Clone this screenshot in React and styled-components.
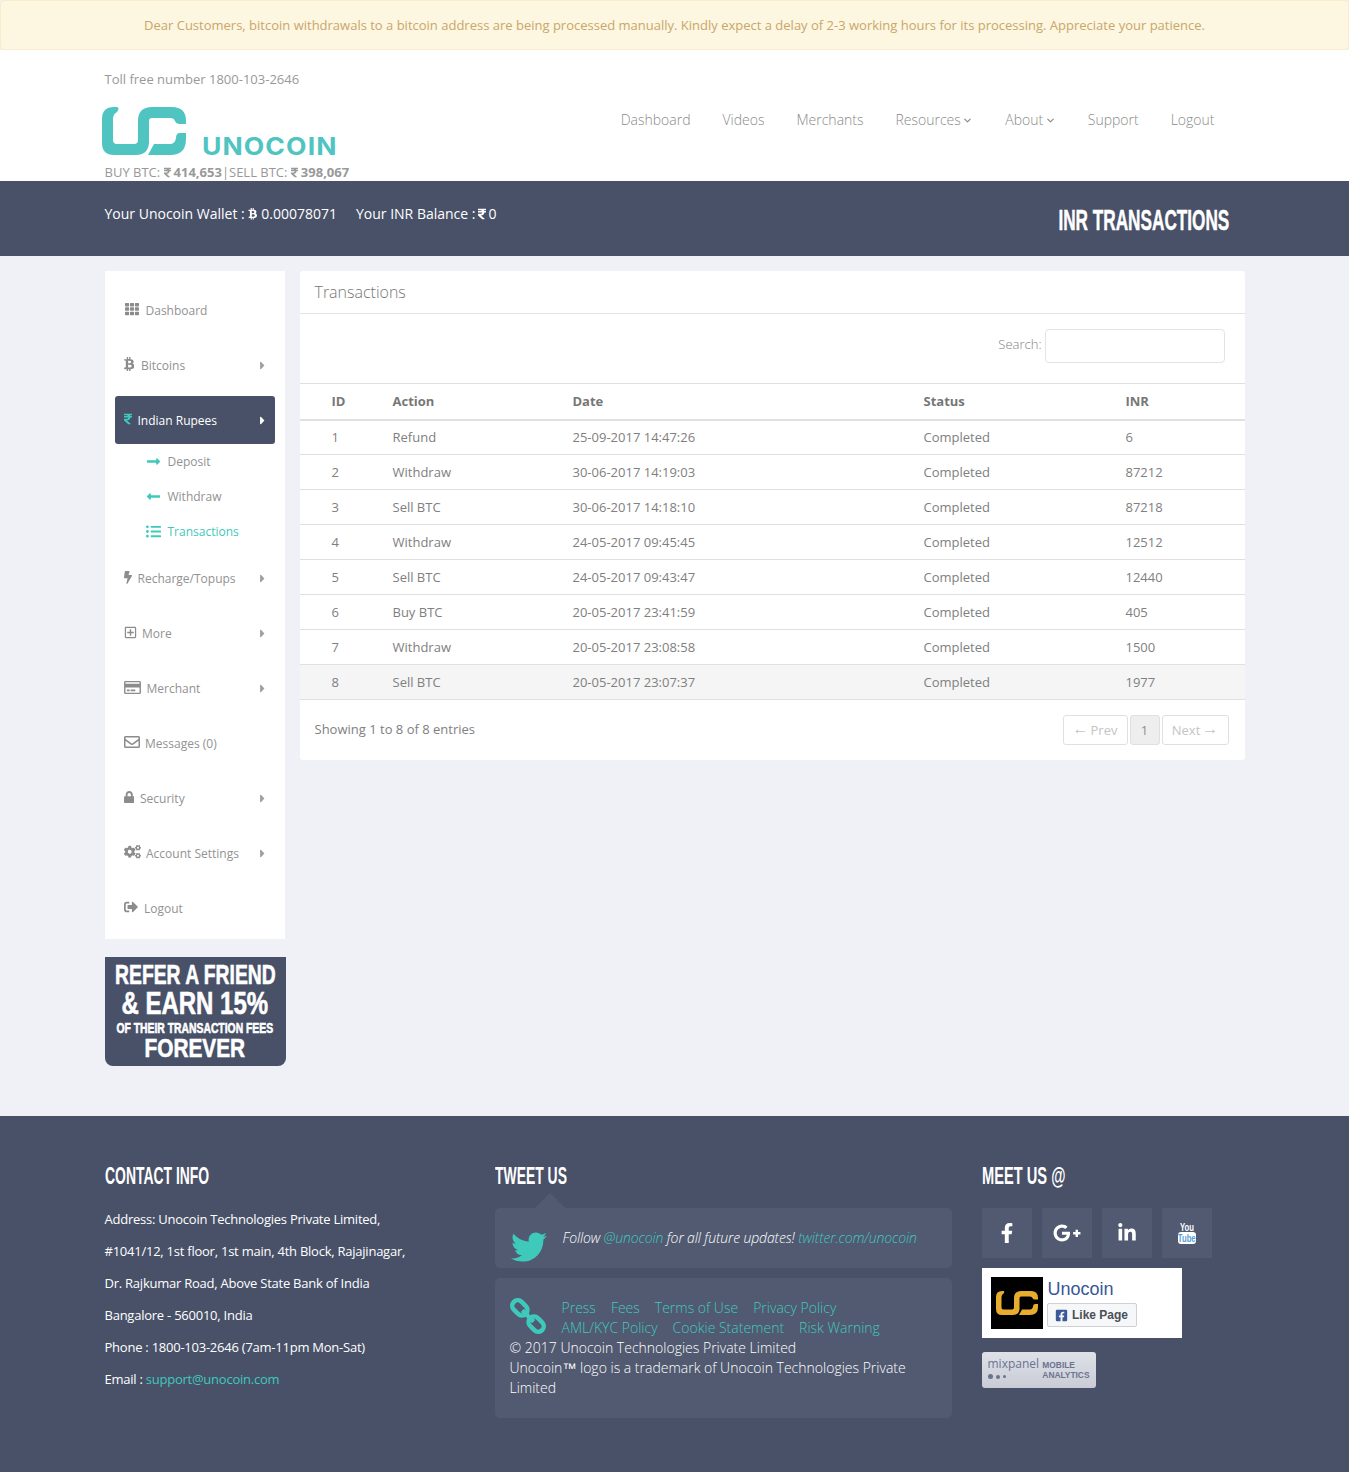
import React from 'react';
import styled, { createGlobalStyle } from 'styled-components';
import {
  FaTh, FaBtc, FaRupeeSign, FaLongArrowAltRight, FaLongArrowAltLeft, FaListUl, FaBolt,
  FaRegPlusSquare, FaRegCreditCard, FaRegEnvelope, FaLock, FaCogs, FaSignOutAlt, FaCaretRight,
  FaTwitter, FaFacebookF, FaGooglePlusG, FaLinkedinIn, FaFacebookSquare,
} from 'react-icons/fa';
import { LuChevronDown } from 'react-icons/lu';

const navy = '#485168';
const card = '#515a71';
const teal = '#3fc9bb';

const GlobalStyle = createGlobalStyle`
  html, body { margin: 0; padding: 0; }
  body {
    background: #eff1f6;
    font-family: "Open Sans", "Liberation Sans", sans-serif;
    font-size: 13px;
    color: #808080;
  }
  a { color: inherit; text-decoration: none; }
  * { box-sizing: border-box; }
`;

const Alert = styled.div`
  height: 50px;
  line-height: 48px;
  text-align: center;
  background: #fdf6e1;
  border: 1px solid #faebcc;
  border-radius: 4px;
  color: #c9a66b;
  font-size: 13px;
`;

const Container = styled.div`
  width: 1140px;
  margin: 0 auto;
`;

const HeaderBar = styled.header`
  background: #fff;
  height: 131px;
`;

const HeaderInner = styled(Container)`
  display: flex;
  height: 100%;
`;

const Brand = styled.div`
  padding-top: 20px;
  line-height: 18px;
  color: #999;
  white-space: nowrap;
`;

const LogoRow = styled.div`
  display: flex;
  align-items: flex-end;
  gap: 16px;
  margin: 19px 0 8px -3px;
  height: 48px;
`;

const LogoWord = styled.span`
  font-family: Inter, "Open Sans", sans-serif;
  font-weight: 700;
  font-size: 24px;
  line-height: 16px;
  letter-spacing: 1px;
  color: #4fc4c1;
`;

// the glyph is narrower in the old icon font, so it is squeezed to the size asked for
const Rupee = styled(FaRupeeSign).attrs({ preserveAspectRatio: 'none' })`
  &&& {
    width: ${(p) => p.$w}px;
    height: ${(p) => p.$h}px;
    vertical-align: -1px;
  }
`;

const PriceRupee = styled(Rupee)`
  margin-right: 3px;
`;

const Nav = styled.nav`
  margin-left: auto;
  padding: 60px 30px 0 0;
  display: flex;
  align-items: flex-start;
  gap: 32px;
  font-size: 14px;
  font-weight: 300;
  line-height: 20px;
  color: #8a8a8a;
`;

const NavLink = styled.a`
  display: flex;
  align-items: center;
  gap: 1.5px;
`;

const WalletBar = styled.div`
  background: ${navy};
  height: 75px;
  color: #fff;
`;

const WalletInner = styled(Container)`
  display: flex;
  justify-content: space-between;
  align-items: flex-start;
`;

const WalletText = styled.div`
  display: flex;
  align-items: flex-start;
  gap: 19px;
  padding-top: 24px;
  font-size: 14px;
  line-height: 18px;
`;

const Money = styled.span`
  display: inline-flex;
  align-items: center;
  gap: 2.5px;
`;

const PageTitle = styled.h1`
  margin: 0;
  padding: 22px 15px 0 0;
  font-size: 30px;
  line-height: 34px;
  font-weight: 700;
  font-family: "Liberation Sans Narrow", "Liberation Sans", sans-serif;
  white-space: nowrap;
  -webkit-text-stroke: 0.5px #fff;
`;

const Condensed = styled.span`
  display: inline-block;
  white-space: nowrap;
  transform: scaleX(${(p) => p.$sx});
  transform-origin: ${(p) => p.$origin || 'left'} center;
`;

const Content = styled(Container)`
  display: flex;
  gap: 15px;
  padding: 15px 0 50px;
  align-items: flex-start;
`;

const SideColumn = styled.div`
  width: 180px;
  flex: none;
`;

const SideMenu = styled.ul`
  display: flow-root;
  list-style: none;
  margin: 0;
  padding: 15px 10px 0;
  background: #fff;
`;

const SideItem = styled.li`
  display: flex;
  align-items: center;
  gap: 5px;
  height: 48px;
  margin-bottom: ${(p) => (p.$tight ? '0' : '7px')};
  padding: 0 10px 0 9px;
  border-radius: 3px;
  font-size: 12px;
  background: ${(p) => (p.$active ? navy : 'transparent')};
  color: ${(p) => (p.$active ? '#fff' : '#929292')};
`;

const SideIcon = styled.span`
  flex: none;
  display: flex;
  width: ${(p) => p.$box}px;
  margin-top: -2px;
  color: ${(p) => (p.$active ? teal : '#8c8c8c')};
  svg {
    width: ${(p) => p.$w}px;
    height: ${(p) => p.$h}px;
  }
`;

const Caret = styled(FaCaretRight)`
  margin-left: auto;
  margin-right: -4.5px;
  color: ${(p) => (p.$active ? '#fff' : '#a0a0a0')};
`;

const SubMenu = styled.ul`
  list-style: none;
  margin: 0 0 5px;
  padding: 0;
`;

const SubItem = styled.li`
  display: flex;
  align-items: center;
  gap: 7px;
  height: 35px;
  padding-left: 31px;
  font-size: 12px;
  color: ${(p) => (p.$current ? teal : '#929292')};
  svg { color: ${teal}; margin-top: -1px; }
`;

const ReferBanner = styled.div`
  margin-top: 18px;
  width: 181px;
  height: 109px;
  padding-top: 4px;
  background: ${navy};
  border-radius: 0 0 8px 8px;
  color: #fff;
  font-family: "Liberation Sans", sans-serif;
  font-weight: 700;
  overflow: hidden;
  -webkit-text-stroke: 0.6px #fff;
`;

const ReferLine = styled.div`
  display: flex;
  justify-content: center;
  font-size: ${(p) => p.$size}px;
  line-height: ${(p) => p.$lh}px;
`;

const Panel = styled.section`
  flex: 1;
  height: 489px;
  background: #fff;
  border-radius: 3px;
`;

const PanelHead = styled.div`
  height: 43px;
  padding: 0 15px;
  line-height: 42px;
  font-size: 16px;
  font-weight: 300;
  color: #777;
  border-bottom: 1px solid #e3e3e3;
`;

const SearchRow = styled.div`
  height: 69px;
  padding: 15px 20px 0 0;
  display: flex;
  justify-content: flex-end;
  align-items: flex-start;
  gap: 3px;
  font-size: 13px;
  font-weight: 300;
  line-height: 30px;
`;

const SearchInput = styled.input`
  width: 180px;
  height: 34px;
  border: 1px solid #e3e3e3;
  border-radius: 4px;
  background: #fff;
  outline: none;
`;

const Table = styled.table`
  width: 945px;
  table-layout: fixed;
  border-collapse: collapse;
  border-top: 1px solid #e0e0e0;
`;

const Th = styled.th`
  height: 36px;
  padding: 0 0 0 15px;
  text-align: left;
  font-size: 13px;
  font-weight: 700;
  color: #777;
  border-bottom: 2px solid #e0e0e0;
  &:first-child { padding-left: 32px; }
`;

const Tr = styled.tr`
  background: ${(p) => (p.$hover ? '#f5f5f5' : 'transparent')};
`;

const Td = styled.td`
  height: 35px;
  padding: 0 0 0 15px;
  border-bottom: 1px solid #e0e0e0;
  &:first-child { padding-left: 32px; }
`;

const TableFoot = styled.div`
  display: flex;
  justify-content: space-between;
  align-items: flex-start;
  padding: 15px 16px 0 15px;
  line-height: 28px;
`;

const Pager = styled.div`
  display: flex;
  gap: 2px;
`;

const PageButton = styled.span`
  display: flex;
  align-items: center;
  justify-content: center;
  gap: 2px;
  width: ${(p) => p.$w}px;
  height: 30px;
  border: 1px solid #e0e0e0;
  border-radius: 3px;
  font-size: 13px;
  color: ${(p) => (p.$on ? '#8f8f8f' : '#c4c4c4')};
  background: ${(p) => (p.$on ? '#eee' : '#fff')};
`;

const Arrow = styled.span`
  margin-top: -3px;
  font-family: "Liberation Sans", sans-serif;
  font-size: 16px;
  line-height: 1;
`;

const Footer = styled.footer`
  background: ${navy};
  height: 356px;
  padding-top: 50px;
  color: #fff;
`;

const FooterGrid = styled(Container)`
  display: grid;
  grid-template-columns: 390px 487px 263px;
`;

const FootHeading = styled.h3`
  margin: 0 0 17px;
  font-family: "Liberation Sans Narrow", "Liberation Sans", sans-serif;
  font-size: 24px;
  font-weight: 700;
  line-height: 20px;
  white-space: nowrap;
`;

const ContactLine = styled.div`
  font-size: 13px;
  line-height: 32px;
  letter-spacing: -0.24px;
  white-space: nowrap;
`;

const TealLink = styled.a`
  color: ${teal};
`;

const FootBoxes = styled.div`
  padding-top: 5px;
  width: 457px;
`;

const TweetBox = styled.div`
  position: relative;
  display: flex;
  align-items: center;
  gap: 16px;
  height: 60px;
  padding: 8px 16px 0;
  background: ${card};
  border-radius: 5px;
  font-size: 14px;
  font-weight: 300;
  font-style: italic;
  letter-spacing: -0.13px;
  white-space: nowrap;
  svg { margin-top: 10px; flex: none; }
  &::before {
    content: '';
    position: absolute;
    left: 40px;
    top: -15px;
    border: 15px solid transparent;
    border-top: 0;
    border-bottom-color: ${card};
  }
`;

const TweetText = styled.div`
  margin-top: -10px;
`;

const LinksBox = styled.div`
  margin-top: 10px;
  height: 140px;
  padding: 20px 15px;
  background: ${card};
  border-radius: 5px;
  font-size: 14px;
  font-weight: 300;
  line-height: 20px;
`;

const LinkIcon = styled.div`
  float: left;
  width: 52px;
  height: 40px;
  color: ${teal};
`;

const LinkRow = styled.div`
  display: flex;
  gap: 15px;
  color: ${teal};
`;

const TradeMark = styled.span`
  font-family: "Liberation Sans", sans-serif;
  font-weight: 400;
`;

const Socials = styled.div`
  padding-top: 5px;
  display: flex;
  gap: 10px;
`;

const SocialTile = styled.a`
  width: 50px;
  height: 50px;
  display: flex;
  align-items: center;
  justify-content: center;
  background: ${card};
  color: #fff;
`;

const YouTube = styled.span`
  width: 18px;
  display: flex;
  flex-direction: column;
  align-items: center;
  font-family: "Liberation Sans", sans-serif;
  font-size: 11px;
  font-weight: 700;
  line-height: 9px;
`;

const Tube = styled.span`
  width: 18px;
  height: 12px;
  display: flex;
  justify-content: center;
  background: #fff;
  color: #5a9fd8;
  border-radius: 3px;
  line-height: 12px;
`;

const FbBox = styled.div`
  margin-top: 10px;
  width: 200px;
  height: 70px;
  padding: 9px;
  display: flex;
  gap: 4px;
  background: #fff;
  font-family: "Liberation Sans", sans-serif;
`;

const FbAvatar = styled.div`
  width: 52px;
  height: 52px;
  background: #000;
  display: flex;
  align-items: center;
  justify-content: center;
`;

const FbName = styled.div`
  padding-left: 1px;
  font-size: 18px;
  line-height: 24px;
  color: #365899;
`;

const FbLike = styled.div`
  margin-top: 2px;
  width: 90px;
  height: 24px;
  display: flex;
  align-items: center;
  justify-content: center;
  gap: 4px;
  font-size: 12px;
  font-weight: 700;
  color: #4b4f56;
  background: #f6f7f9;
  border: 1px solid #ced0d4;
  border-radius: 2px;
  svg { color: #3b5998; }
`;

const Mixpanel = styled.div`
  margin-top: 14px;
  width: 114px;
  height: 36px;
  padding: 6px;
  display: flex;
  justify-content: space-between;
  background: linear-gradient(#dfe1e8, #c9ccd6);
  border-radius: 3px;
  color: #6a7390;
`;

const MixName = styled.div`
  font-size: 12px;
  line-height: 12px;
`;

const MixDots = styled.div`
  display: flex;
  align-items: center;
  gap: 3px;
  margin-top: 4px;
`;

const MixDot = styled.i`
  width: ${(p) => p.$d}px;
  height: ${(p) => p.$d}px;
  border-radius: 50%;
  background: currentColor;
`;

const MixTag = styled.div`
  font-family: "Liberation Sans", sans-serif;
  font-size: 8.4px;
  font-weight: 700;
  line-height: 10px;
  margin-top: 2px;
`;

// the two part UC mark, also used in gold in the facebook box
const LogoMark = ({ width, height, color }) => (
  <svg width={width} height={height} viewBox="0 0 84 48" fill={color}>
    <path d="M0 12Q0 0 12 0L15 0Q18 1 15 5Q11 7 11 12L11 33Q11 37 15 37L32 37Q36 37 36 33L36 14Q36 0 50 0L70 0Q84 0 84 14L84 17L78 17Q74 17 73 14Q72 11 68 11L50 11Q47 11 47 14L47 36Q46 48 34 48L12 48Q0 48 0 36Z" />
    <path d="M46 48L52 37L68 37Q73 37 74 31Q74 26 78 26L84 26L84 32Q84 48 68 48Z" />
  </svg>
);

const ChainIcon = () => (
  <svg width="36" height="36" viewBox="0 0 36 36" fill="none" stroke="currentColor" strokeWidth="4.5">
    <g transform="rotate(45 18 18)">
      <rect x="-2" y="12.5" width="17" height="11" rx="5.5" />
      <rect x="21" y="12.5" width="17" height="11" rx="5.5" />
      <path d="M10 18L26 18" />
    </g>
  </svg>
);

const rows = [
  [1, 'Refund', '25-09-2017 14:47:26', 'Completed', 6],
  [2, 'Withdraw', '30-06-2017 14:19:03', 'Completed', 87212],
  [3, 'Sell BTC', '30-06-2017 14:18:10', 'Completed', 87218],
  [4, 'Withdraw', '24-05-2017 09:45:45', 'Completed', 12512],
  [5, 'Sell BTC', '24-05-2017 09:43:47', 'Completed', 12440],
  [6, 'Buy BTC', '20-05-2017 23:41:59', 'Completed', 405],
  [7, 'Withdraw', '20-05-2017 23:08:58', 'Completed', 1500],
  [8, 'Sell BTC', '20-05-2017 23:07:37', 'Completed', 1977],
];

const contact = [
  'Address: Unocoin Technologies Private Limited,',
  '#1041/12, 1st floor, 1st main, 4th Block, Rajajinagar,',
  'Dr. Rajkumar Road, Above State Bank of India',
  'Bangalore - 560010, India',
  'Phone : 1800-103-2646 (7am-11pm Mon-Sat)',
];

const App = () => {
  return (
    <>
      <GlobalStyle />
      <Alert>
        Dear Customers, bitcoin withdrawals to a bitcoin address are being processed manually. Kindly expect a delay of 2-3 working hours for its processing. Appreciate your patience.
      </Alert>

      <HeaderBar>
        <HeaderInner>
          <Brand>
            <div>Toll free number 1800-103-2646</div>
            <LogoRow>
              <LogoMark width={84} height={48} color="#4fc4c1" />
              <LogoWord><Condensed $sx={1.105}>UNOCOIN</Condensed></LogoWord>
            </LogoRow>
            <div>
              BUY BTC: <PriceRupee $w={7} $h={11} /><b>414,653</b>|SELL BTC: <PriceRupee $w={7} $h={11} /><b>398,067</b>
            </div>
          </Brand>
          <Nav>
            <NavLink>Dashboard</NavLink>
            <NavLink>Videos</NavLink>
            <NavLink>Merchants</NavLink>
            <NavLink>Resources <LuChevronDown size={11} strokeWidth={2.6} /></NavLink>
            <NavLink>About <LuChevronDown size={11} strokeWidth={2.6} /></NavLink>
            <NavLink>Support</NavLink>
            <NavLink>Logout</NavLink>
          </Nav>
        </HeaderInner>
      </HeaderBar>

      <WalletBar>
        <WalletInner>
          <WalletText>
            <Money>Your Unocoin Wallet : <FaBtc size={11.5} /> 0.00078071</Money>
            <Money>Your INR Balance : <Rupee $w={8} $h={12} /> 0</Money>
          </WalletText>
          <PageTitle><Condensed $sx={0.573} $origin="right">INR TRANSACTIONS</Condensed></PageTitle>
        </WalletInner>
      </WalletBar>

      <Content>
        <SideColumn>
          <SideMenu>
            <SideItem><SideIcon $box={17} $w={16} $h={14}><FaTh /></SideIcon>Dashboard</SideItem>
            <SideItem><SideIcon $box={12.5} $w={10.5} $h={14}><FaBtc /></SideIcon>Bitcoins<Caret size={13} /></SideItem>
            <SideItem $active $tight>
              <SideIcon $box={9} $w={8} $h={12} $active><FaRupeeSign preserveAspectRatio="none" /></SideIcon>
              Indian Rupees<Caret size={13} $active />
            </SideItem>
            <SubMenu>
              <SubItem><FaLongArrowAltRight size={15} />Deposit</SubItem>
              <SubItem><FaLongArrowAltLeft size={15} />Withdraw</SubItem>
              <SubItem $current><FaListUl size={15} />Transactions</SubItem>
            </SubMenu>
            <SideItem><SideIcon $box={9} $w={8} $h={13}><FaBolt /></SideIcon>Recharge/Topups<Caret size={13} /></SideItem>
            <SideItem><SideIcon $box={13.5} $w={13} $h={13}><FaRegPlusSquare /></SideIcon>More<Caret size={13} /></SideItem>
            <SideItem><SideIcon $box={18} $w={17} $h={15}><FaRegCreditCard /></SideIcon>Merchant<Caret size={13} /></SideItem>
            <SideItem><SideIcon $box={16.5} $w={16} $h={16}><FaRegEnvelope /></SideIcon>Messages (0)</SideItem>
            <SideItem><SideIcon $box={11.5} $w={10.5} $h={12}><FaLock /></SideIcon>Security<Caret size={13} /></SideItem>
            <SideItem><SideIcon $box={17.5} $w={17} $h={13.6}><FaCogs /></SideIcon>Account Settings<Caret size={13} /></SideItem>
            <SideItem><SideIcon $box={15.5} $w={14} $h={14}><FaSignOutAlt /></SideIcon>Logout</SideItem>
          </SideMenu>
          <ReferBanner>
            <ReferLine $size={28} $lh={28}><Condensed $sx={0.69} $origin="center">REFER A FRIEND</Condensed></ReferLine>
            <ReferLine $size={32} $lh={29}><Condensed $sx={0.75} $origin="center">&amp; EARN 15%</Condensed></ReferLine>
            <ReferLine $size={14} $lh={20}><Condensed $sx={0.74} $origin="center">OF THEIR TRANSACTION FEES</Condensed></ReferLine>
            <ReferLine $size={26} $lh={20}><Condensed $sx={0.8} $origin="center">FOREVER</Condensed></ReferLine>
          </ReferBanner>
        </SideColumn>

        <Panel>
          <PanelHead>Transactions</PanelHead>
          <SearchRow>Search: <SearchInput /></SearchRow>
          <Table>
            <colgroup>
              <col width="78" />
              <col width="180" />
              <col width="351" />
              <col width="202" />
              <col width="134" />
            </colgroup>
            <thead>
              <tr>
                <Th>ID</Th>
                <Th>Action</Th>
                <Th>Date</Th>
                <Th>Status</Th>
                <Th>INR</Th>
              </tr>
            </thead>
            <tbody>
              {rows.map((r) => (
                <Tr key={r[0]} $hover={r[0] === 8}>
                  {r.map((c, i) => <Td key={i}>{c}</Td>)}
                </Tr>
              ))}
            </tbody>
          </Table>
          <TableFoot>
            <span>Showing 1 to 8 of 8 entries</span>
            <Pager>
              <PageButton $w={65}><Arrow>←</Arrow> Prev</PageButton>
              <PageButton $w={30} $on>1</PageButton>
              <PageButton $w={67}>Next <Arrow>→</Arrow></PageButton>
            </Pager>
          </TableFoot>
        </Panel>
      </Content>

      <Footer>
        <FooterGrid>
          <div>
            <FootHeading><Condensed $sx={0.58}>CONTACT INFO</Condensed></FootHeading>
            {contact.map((line) => <ContactLine key={line}>{line}</ContactLine>)}
            <ContactLine>Email : <TealLink>support@unocoin.com</TealLink></ContactLine>
          </div>
          <div>
            <FootHeading><Condensed $sx={0.58}>TWEET US</Condensed></FootHeading>
            <FootBoxes>
              <TweetBox>
                <FaTwitter size={36} color={teal} />
                <TweetText>Follow <TealLink>@unocoin</TealLink> for all future updates! <TealLink>twitter.com/unocoin</TealLink></TweetText>
              </TweetBox>
              <LinksBox>
                <LinkIcon><ChainIcon /></LinkIcon>
                <LinkRow><span>Press</span><span>Fees</span><span>Terms of Use</span><span>Privacy Policy</span></LinkRow>
                <LinkRow><span>AML/KYC Policy</span><span>Cookie Statement</span><span>Risk Warning</span></LinkRow>
                <div>© 2017 Unocoin Technologies Private Limited</div>
                <div>Unocoin<TradeMark>™</TradeMark> logo is a trademark of Unocoin Technologies Private Limited</div>
              </LinksBox>
            </FootBoxes>
          </div>
          <div>
            <FootHeading><Condensed $sx={0.61}>MEET US @</Condensed></FootHeading>
            <Socials>
              <SocialTile><FaFacebookF size={20} /></SocialTile>
              <SocialTile><FaGooglePlusG size={28} /></SocialTile>
              <SocialTile><FaLinkedinIn size={20} /></SocialTile>
              <SocialTile>
                <YouTube>
                  <Condensed $sx={0.7} $origin="center">You</Condensed>
                  <Tube><Condensed $sx={0.7} $origin="center">Tube</Condensed></Tube>
                </YouTube>
              </SocialTile>
            </Socials>
            <FbBox>
              <FbAvatar><LogoMark width={42} height={24} color="#e8ad2c" /></FbAvatar>
              <div>
                <FbName>Unocoin</FbName>
                <FbLike><FaFacebookSquare size={13} />Like Page</FbLike>
              </div>
            </FbBox>
            <Mixpanel>
              <div>
                <MixName>mixpanel</MixName>
                <MixDots><MixDot $d={5} /><MixDot $d={4} /><MixDot $d={3} /></MixDots>
              </div>
              <MixTag>MOBILE<br />ANALYTICS</MixTag>
            </Mixpanel>
          </div>
        </FooterGrid>
      </Footer>
    </>
  );
};

export default App;
